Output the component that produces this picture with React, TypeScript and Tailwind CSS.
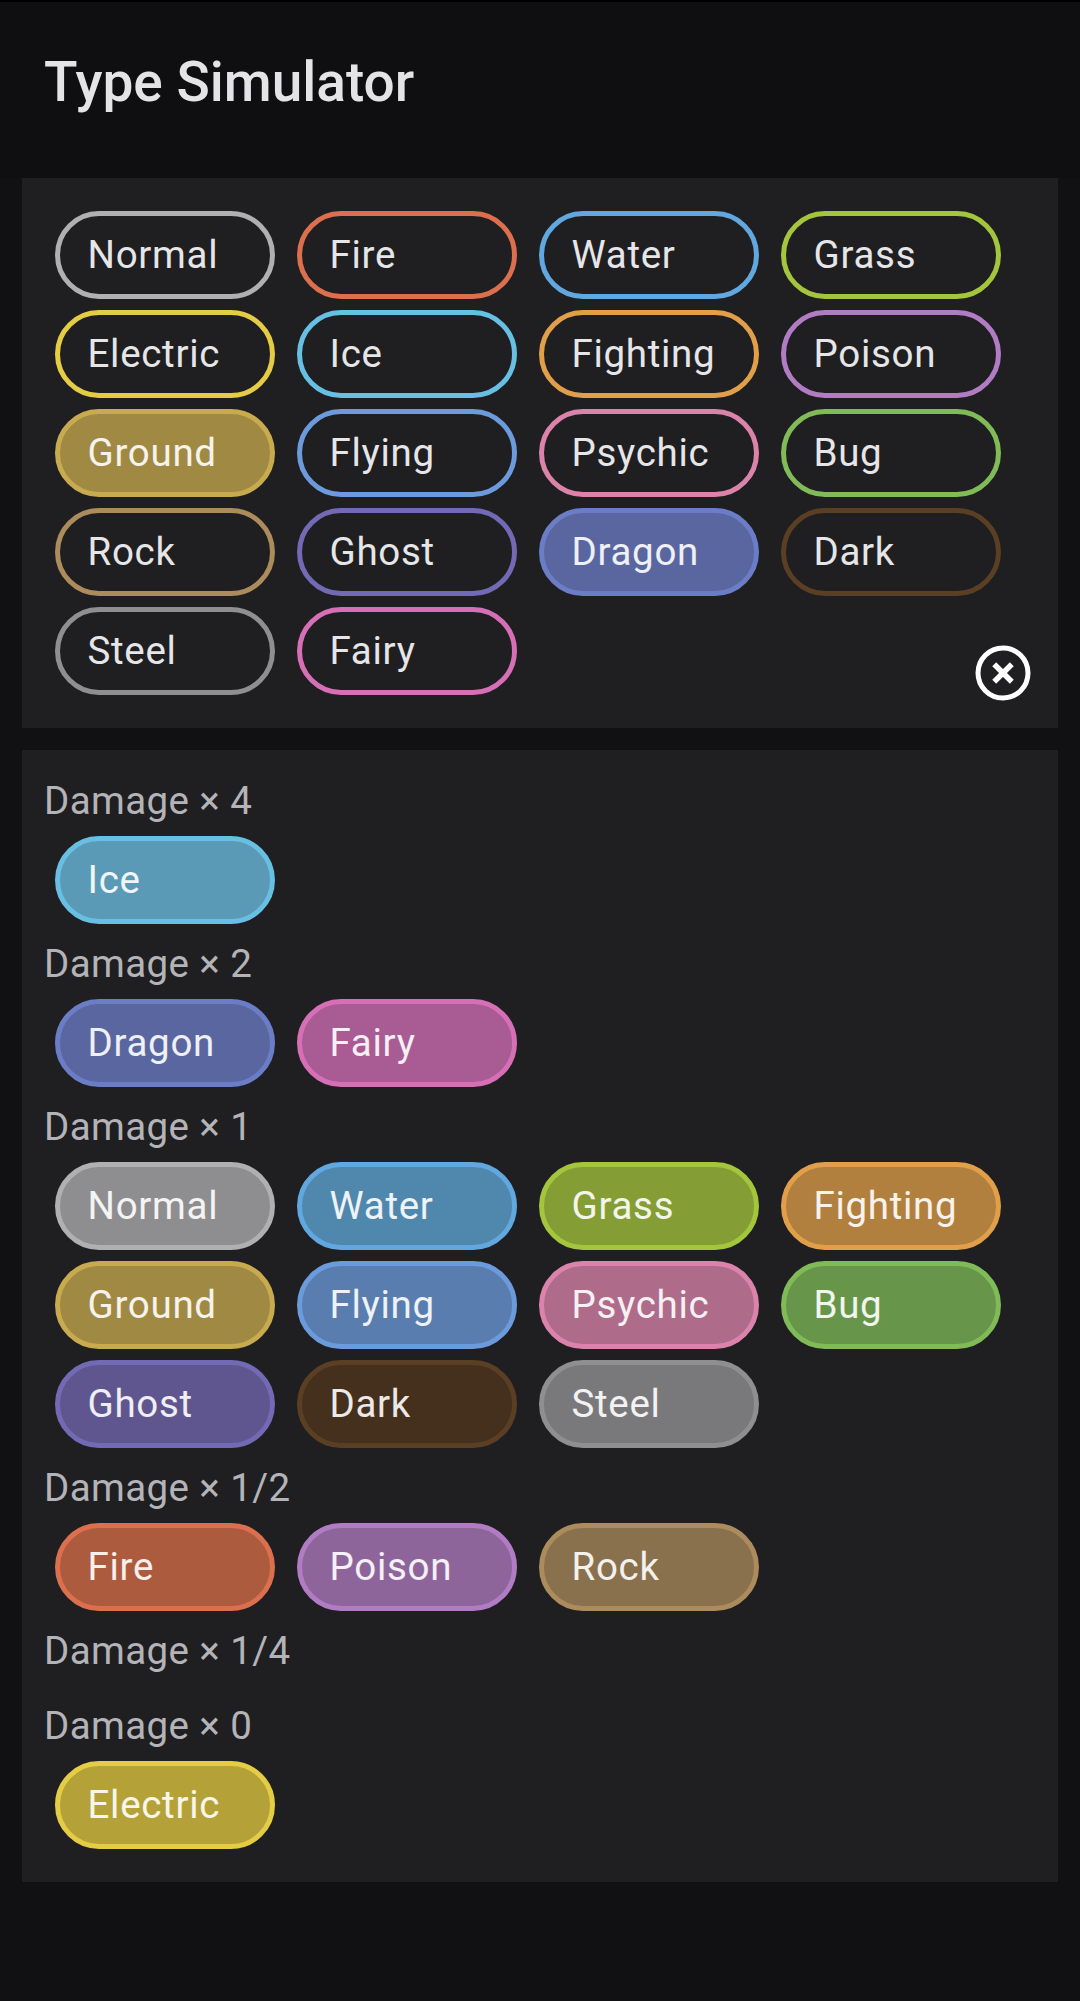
const COLORS: Record<string, { border: string; fill: string }> = {
  Normal: { border: 'border-[#b0afb1]', fill: 'bg-[#8e8d8f]' },
  Fire: { border: 'border-[#dc6f4d]', fill: 'bg-[#ad5b3e]' },
  Water: { border: 'border-[#60a8df]', fill: 'bg-[#5087ad]' },
  Grass: { border: 'border-[#a3c63c]', fill: 'bg-[#849d35]' },
  Electric: { border: 'border-[#e5cc45]', fill: 'bg-[#b4a238]' },
  Ice: { border: 'border-[#68bfe4]', fill: 'bg-[#5b9ab6]' },
  Fighting: { border: 'border-[#e29f4a]', fill: 'bg-[#b1803f]' },
  Poison: { border: 'border-[#b27cc4]', fill: 'bg-[#8e659b]' },
  Ground: { border: 'border-[#c9ab4f]', fill: 'bg-[#9f8943]' },
  Flying: { border: 'border-[#6b9bdc]', fill: 'bg-[#587dae]' },
  Psychic: { border: 'border-[#dc83ac]', fill: 'bg-[#ae6b8a]' },
  Bug: { border: 'border-[#80bb58]', fill: 'bg-[#67964a]' },
  Rock: { border: 'border-[#ac8b5c]', fill: 'bg-[#8a714d]' },
  Ghost: { border: 'border-[#7469b4]', fill: 'bg-[#5f568f]' },
  Dragon: { border: 'border-[#6c7dc8]', fill: 'bg-[#59669f]' },
  Dark: { border: 'border-[#5a3f25]', fill: 'bg-[#45301e]' },
  Steel: { border: 'border-[#8f8e90]', fill: 'bg-[#79787a]' },
  Fairy: { border: 'border-[#d76fb6]', fill: 'bg-[#a95b93]' },
}

const TYPES = [
  'Normal', 'Fire', 'Water', 'Grass', 'Electric', 'Ice', 'Fighting', 'Poison', 'Ground',
  'Flying', 'Psychic', 'Bug', 'Rock', 'Ghost', 'Dragon', 'Dark', 'Steel', 'Fairy',
]

const DAMAGE = [
  { label: 'Damage × 4', types: ['Ice'] },
  { label: 'Damage × 2', types: ['Dragon', 'Fairy'] },
  { label: 'Damage × 1', types: ['Normal', 'Water', 'Grass', 'Fighting', 'Ground', 'Flying', 'Psychic', 'Bug', 'Ghost', 'Dark', 'Steel'] },
  { label: 'Damage × 1/2', types: ['Fire', 'Poison', 'Rock'] },
  { label: 'Damage × 1/4', types: [] },
  { label: 'Damage × 0', types: ['Electric'] },
]

function Chip({ name, selected }: { name: string; selected: boolean }) {
  const c = COLORS[name]
  return (
    <div className={`w-[220px] h-[88px] rounded-full border-[5.5px] ${c.border} ${selected ? `${c.fill} text-white/90` : 'text-[#e6e6e8]'} flex items-center pl-[27.5px] text-[38.5px] tracking-[0.7px]`}>
      {name}
    </div>
  )
}

export default function App() {
  return (
    <div className="w-[1080px] h-[2001px] bg-[#111114] font-['Roboto',sans-serif]">
      <div className="h-[178px] bg-[#0f0f12] border-t-2 border-black pl-[44px] pt-[47px]">
        <h1 className="text-[55px] leading-[66px] font-medium text-[#e4e4e7]">Type Simulator</h1>
      </div>
      <div className="flex flex-col gap-[22px] px-[22px]">
        <div className="relative bg-[#1f1f21] p-[33px]">
          <div className="flex flex-wrap gap-x-[22px] gap-y-[11px]">
            {TYPES.map(t => <Chip key={t} name={t} selected={t === 'Ground' || t === 'Dragon'} />)}
          </div>
          <button className="absolute right-[22px] bottom-[22px] w-[66px] h-[66px] flex items-center justify-center">
            <svg viewBox="0 0 24 24" className="w-[66px] h-[66px]" fill="none" stroke="#fff">
              <circle cx="12" cy="12" r="9.09" strokeWidth="1.82" />
              <path d="M8.8 8.8l6.4 6.4M15.2 8.8l-6.4 6.4" strokeWidth="2" />
            </svg>
          </button>
        </div>
        <div className="bg-[#1f1f21] px-[22px] pt-[21px] pb-[23px]">
          {DAMAGE.map(d => (
            <div key={d.label}>
              <div className="h-[56px] leading-[60px] text-[38.5px] tracking-[0.4px] text-[#b4b4b8]">{d.label}</div>
              <div className="flex flex-wrap gap-x-[22px] gap-y-[11px] pl-[11px] pt-[9px] pb-[10px]">
                {d.types.map(t => <Chip key={t} name={t} selected />)}
              </div>
            </div>
          ))}
        </div>
      </div>
    </div>
  )
}
